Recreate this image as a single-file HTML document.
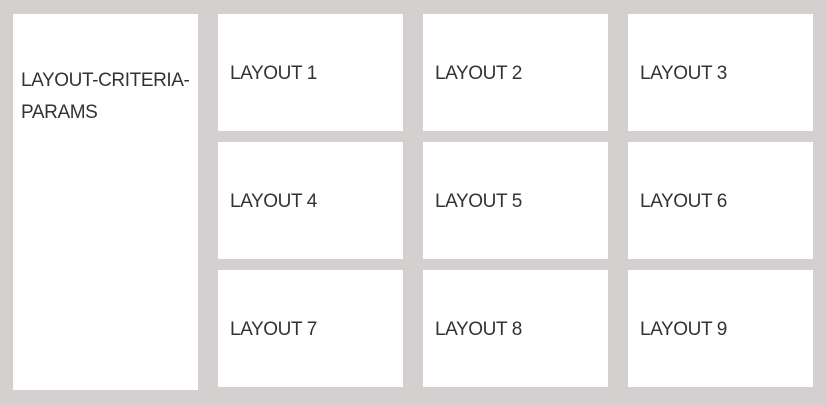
<!DOCTYPE html>
<html><head><style>
html,body{margin:0;padding:0;width:826px;height:405px;background:#d3d0cf;overflow:hidden;font-family:"Liberation Sans",sans-serif;color:#333;}
.b{position:absolute;background:#fff;font-size:19px;letter-spacing:-0.4px;}
.c{display:flex;align-items:center;padding-left:12px;padding-top:3px;box-sizing:border-box;width:185px;height:117px;}
.l{left:13px;top:14px;width:185px;height:376px;padding:51px 0 0 8px;box-sizing:border-box;line-height:32px;}
</style></head><body>
<div class="b l">LAYOUT-CRITERIA-<br>PARAMS</div>
<div class="b c" style="left:218px;top:14px">LAYOUT 1</div>
<div class="b c" style="left:423px;top:14px">LAYOUT 2</div>
<div class="b c" style="left:628px;top:14px">LAYOUT 3</div>
<div class="b c" style="left:218px;top:142px">LAYOUT 4</div>
<div class="b c" style="left:423px;top:142px">LAYOUT 5</div>
<div class="b c" style="left:628px;top:142px">LAYOUT 6</div>
<div class="b c" style="left:218px;top:270px">LAYOUT 7</div>
<div class="b c" style="left:423px;top:270px">LAYOUT 8</div>
<div class="b c" style="left:628px;top:270px">LAYOUT 9</div>
</body></html>
